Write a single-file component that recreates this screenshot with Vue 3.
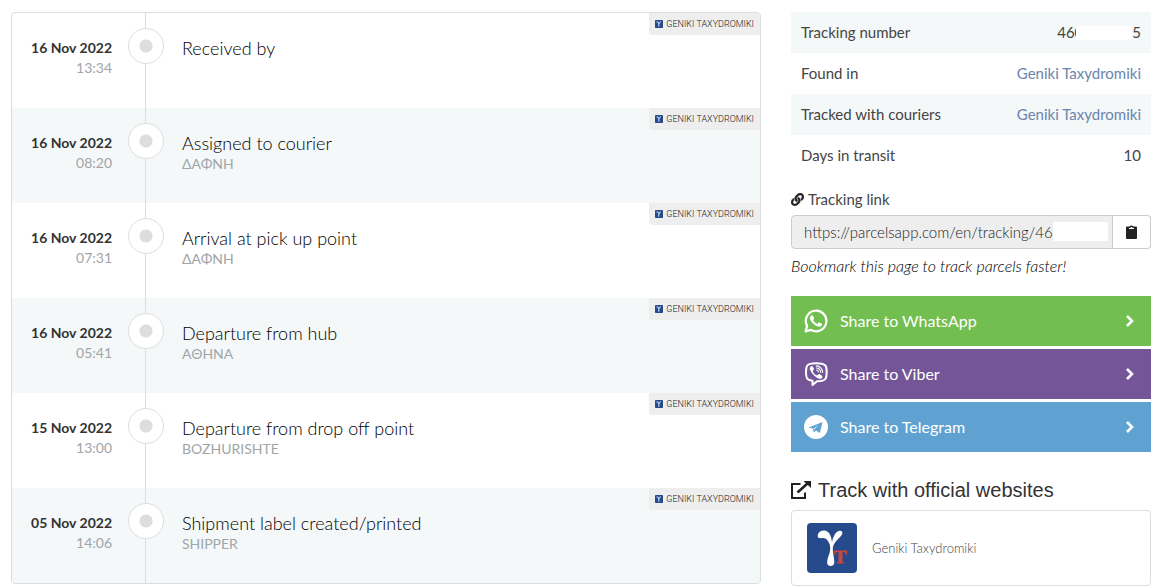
<script setup>
const events = [
  { date: '16 Nov 2022', time: '13:34', title: 'Received by', place: '' },
  { date: '16 Nov 2022', time: '08:20', title: 'Assigned to courier', place: 'ΔΑΦΝΗ' },
  { date: '16 Nov 2022', time: '07:31', title: 'Arrival at pick up point', place: 'ΔΑΦΝΗ' },
  { date: '16 Nov 2022', time: '05:41', title: 'Departure from hub', place: 'ΑΘΗΝΑ' },
  { date: '15 Nov 2022', time: '13:00', title: 'Departure from drop off point', place: 'BOZHURISHTE' },
  { date: '05 Nov 2022', time: '14:06', title: 'Shipment label created/printed', place: 'SHIPPER' },
]
const shares = [
  { id: 'whatsapp', name: 'Share to WhatsApp' },
  { id: 'viber', name: 'Share to Viber' },
  { id: 'telegram', name: 'Share to Telegram' },
]
const trackingUrl = 'https://parcelsapp.com/en/tracking/46'
</script>

<template>
  <main class="page">
    <ol class="timeline">
      <li v-for="e in events" :key="e.date + e.time" class="event">
        <div class="when">
          <strong>{{ e.date }}</strong>
          <time>{{ e.time }}</time>
        </div>
        <div class="rail"><span class="dot"></span></div>
        <div class="what">
          <div class="title">{{ e.title }}</div>
          <div v-if="e.place" class="place">{{ e.place }}</div>
        </div>
        <div class="badge">
          <svg viewBox="0 0 50 50" aria-hidden="true">
            <rect width="50" height="50" rx="4" fill="#264b8c" />
            <path d="M10 12q12-4 14 12v18M24 26q2-14 13-16" fill="none" stroke="#dfe8f5" stroke-width="6" />
          </svg>
          <span>GENIKI TAXYDROMIKI</span>
        </div>
      </li>
    </ol>

    <aside class="side">
      <table class="info">
        <tbody>
          <tr>
            <th scope="row">Tracking number</th>
            <td><span class="number">460<i class="mask"></i>5</span></td>
          </tr>
          <tr>
            <th scope="row">Found in</th>
            <td><a href="#">Geniki Taxydromiki</a></td>
          </tr>
          <tr>
            <th scope="row">Tracked with couriers</th>
            <td><a href="#">Geniki Taxydromiki</a></td>
          </tr>
          <tr>
            <th scope="row">Days in transit</th>
            <td>10</td>
          </tr>
        </tbody>
      </table>

      <label class="link-label" for="tracking-link">
        <svg viewBox="0 0 512 512" aria-hidden="true">
          <path fill="#222" stroke="#222" stroke-width="14" d="M326.6 185.4c59.7 59.8 58.9 155.7.4 214.6l-.4.4-67.2 67.2c-59.3 59.3-155.7 59.3-215 0s-59.3-155.7 0-215l37.1-37.1c9.8-9.8 26.8-3.3 27.3 10.6.6 17.7 3.8 35.5 9.7 52.7 2 5.8.6 12.3-3.8 16.6l-13.1 13.1c-28 28-28.9 73.7-1.2 102 28 28.6 74.1 28.7 102.3.5l67.2-67.2c28.2-28.2 28.1-73.8 0-101.8-3.7-3.7-7.4-6.6-10.3-8.6a16 16 0 0 1-6.9-12.6c-.4-10.6 3.3-21.5 11.7-29.8l21-21.1c5.5-5.5 14.2-6.2 20.6-1.7a152.5 152.5 0 0 1 20.5 17.2zM467.5 44.4c-59.3-59.3-155.7-59.3-215 0l-67.2 67.2-.4.4c-58.6 58.9-59.4 154.8.4 214.6a152.5 152.5 0 0 0 20.5 17.2c6.4 4.5 15.1 3.8 20.6-1.7l21-21.1c8.4-8.4 12.1-19.2 11.7-29.8a16 16 0 0 0-6.9-12.6c-2.9-2-6.6-4.9-10.3-8.6-28.1-28-28.2-73.6 0-101.8l67.2-67.2c28.2-28.2 74.3-28.1 102.3.5 27.8 28.3 26.9 73.9-1.2 102l-13.1 13.1c-4.4 4.4-5.8 10.8-3.8 16.6 5.9 17.2 9 35 9.7 52.7.5 13.9 17.5 20.4 27.3 10.6l37.1-37.1c59.3-59.3 59.3-155.7 0-215z" />
        </svg>
        <span>Tracking link</span>
      </label>
      <div class="link-group">
        <input id="tracking-link" type="text" readonly :value="trackingUrl" />
        <i class="link-mask"></i>
        <button type="button" aria-label="Copy link">
          <svg viewBox="0 0 11 14" aria-hidden="true">
            <path fill="#222" fill-rule="evenodd" d="M1 1.5h2.6a2 1.6 0 0 1 3.8 0H10a1 1 0 0 1 1 1V13a1 1 0 0 1-1 1H1a1 1 0 0 1-1-1V2.500a1 1 0 0 1 1-1zM3 3v1h5V3H6.300V2H4.700v1z" />
          </svg>
        </button>
      </div>
      <p class="hint">Bookmark this page to track parcels faster!</p>

      <nav class="shares">
        <a v-for="s in shares" :key="s.id" href="#" class="share" :class="s.id">
          <svg v-if="s.id === 'whatsapp'" class="brand" viewBox="0 0 24 24" aria-hidden="true">
            <path fill="#fff" d="M17.472 14.382c-.297-.149-1.758-.867-2.030-.967-.273-.099-.471-.148-.670.150-.197.297-.767.966-.940 1.164-.173.199-.347.223-.644.075-.297-.150-1.255-.463-2.390-1.475-.883-.788-1.480-1.761-1.653-2.059-.173-.297-.018-.458.130-.606.134-.133.298-.347.446-.520.149-.174.198-.298.298-.497.099-.198.050-.371-.025-.520-.075-.149-.669-1.612-.916-2.207-.242-.579-.487-.500-.669-.510-.173-.008-.371-.010-.570-.010-.198 0-.520.074-.792.372-.272.297-1.040 1.016-1.040 2.479 0 1.462 1.065 2.875 1.213 3.074.149.198 2.096 3.200 5.077 4.487.709.306 1.262.489 1.694.625.712.227 1.360.195 1.871.118.571-.085 1.758-.719 2.006-1.413.248-.694.248-1.289.173-1.413-.074-.124-.272-.198-.570-.347z" />
            <path fill="none" stroke="#fff" stroke-width="2.200" stroke-linejoin="round" d="M1.600 22.400l1.500-5.500a10.300 10.300 0 1 1 4 4z" />
          </svg>
          <svg v-else-if="s.id === 'viber'" class="brand" viewBox="0 0 24 24" aria-hidden="true">
            <path fill="none" stroke="#fff" stroke-width="2" stroke-linejoin="round" d="M12 1.200c6 0 8.300.8 9.500 2.500 1.600 2.300 1.600 10.500 0 13-1.200 1.800-4 2.500-8.500 2.500L8.500 23v-4.300c-3-.4-4.500-1-5.400-2.300-1.500-2.300-1.500-10.400 0-12.700C4.200 2 6.500 1.200 12 1.200z" />
            <path fill="#fff" d="M7.100 4.200c.7-.3 1.300.2 2.500 1.900.6 1 .4 1.600-.4 2.200-.6.500-.4 1.300.5 2.600.9 1.200 1.900 2.100 2.900 2.400.6.200.9-.1 1.300-.6.600-.7 1.300-.8 2.200-.3 2 1.200 2.700 2 2.300 2.900-.6 1.200-1.800 2-2.900 1.600-4.100-1.600-7.600-5-9.600-9.500-.4-1.100.1-2.500 1.200-3.200z" />
            <path fill="none" stroke="#fff" stroke-width="1.100" stroke-linecap="round" d="M12.300 3.900a6.300 6.300 0 0 1 6.300 6.600M12.500 6a4 4 0 0 1 4 4.200M12.800 8.100q1.500.2 1.600 1.700" />
          </svg>
          <svg v-else class="brand" viewBox="0 0 24 24" aria-hidden="true">
            <circle cx="12" cy="12" r="12" fill="#fff" />
            <path fill="#5fa2d2" d="M5.200 12.200L17.400 7.400c.6-.2 1 .1.800.9l-2.100 8.700c-.1.700-.6.900-1.200.6l-2.900-2.200-1.600 1.600c-.3.300-.7.200-.8-.2l-.7-3.200-3.600-.8c-.5-.1-.5-.4-.1-.6zM9.600 13.500l.5 2.100.3-1.600 5-4.600z" />
          </svg>
          <span>{{ s.name }}</span>
          <svg class="chevron" viewBox="0 0 9 12" aria-hidden="true">
            <path d="M2 1l5 5-5 5" fill="none" stroke="#fff" stroke-width="2.600" />
          </svg>
        </a>
      </nav>

      <h2 class="heading">
        <svg viewBox="0 0 20 18" aria-hidden="true">
          <path fill="none" stroke="#222" stroke-width="2" d="M9.500 3H1v14h13v-5.500" />
          <path fill="none" stroke="#222" stroke-width="2.600" d="M6.500 11.500l10-9" />
          <path fill="#222" d="M12.500 0H20v7z" />
        </svg>
        <span>Track with official websites</span>
      </h2>
      <a href="#" class="site">
        <svg viewBox="0 0 50 50" aria-hidden="true">
          <rect width="50" height="50" rx="4" fill="#264b8c" />
          <path fill="#c9473f" d="M27 27.500h13v4h-1c-.3-1.800-1-2.500-2.800-2.500h-.7v9c0 1.200.5 1.500 2 1.600v.9h-8v-.9c1.500-.1 2-.4 2-1.600v-9h-.7c-1.800 0-2.500.7-2.800 2.500h-1z" />
          <path fill="#fff" d="M11 14.500C9.800 10 13.500 7 17.500 7.500c5.500.8 7.200 7 7.500 12C26 13.500 28.500 8.500 32.500 7.700c2.500-.3 3.600 1.600 2.500 3.700-1.800 3.500-8.500 7-9.200 13.600-.2 5 1.500 9.500 1.500 14 0 2.600-1.500 4-3.700 4s-3.600-1.500-3.500-4c.2-4.500 3.300-9 3.200-14-.2-5-3.300-10-7.300-10-1.500 0-3 .6-5-.5z" />
        </svg>
        <span>Geniki Taxydromiki</span>
      </a>
    </aside>
  </main>
</template>

<style>
body {
  margin: 0;
  background: #fff;
}
</style>

<style scoped>
.page {
  box-sizing: border-box;
  display: grid;
  grid-template-columns: 25fr 12fr;
  gap: 30px;
  align-items: start;
  padding: 12px 10px 0 11px;
  font: 400 15px/20px Lato, "Open Sans", "Noto Sans", sans-serif;
  color: #444;
}
.timeline {
  list-style: none;
  margin: 0;
  padding: 0;
  border: 1px solid #ddd;
  border-radius: 4px;
  overflow: hidden;
}
.event {
  position: relative;
  display: grid;
  grid-template-columns: 100px 68px 1fr;
  min-height: 95px;
}
.event:nth-child(even) {
  background: #f4f8f9;
}
.when {
  padding-top: 25px;
  font-size: 14px;
  text-align: right;
}
.when strong,
.when time {
  display: block;
}
.when strong {
  color: #333;
  font-weight: 700;
}
.when time,
.place {
  color: #a0a5a8;
}
.place {
  font-size: 14px;
}
.rail {
  display: flex;
  justify-content: center;
  align-items: flex-start;
  padding-top: 15px;
  background: linear-gradient(#ddd, #ddd) 33px 0 / 1px 100% no-repeat;
}
.dot {
  box-sizing: border-box;
  width: 36px;
  height: 36px;
  border: 1px solid #ddd;
  border-radius: 50%;
  background: radial-gradient(circle, #ddd 6px, #fff 7px);
}
.what {
  padding: 25px 0 0 2px;
}
.title {
  color: #000;
  font-size: 18px;
  font-weight: 300;
  line-height: 20px;
}
.place {
  line-height: 22px;
}
.badge {
  position: absolute;
  top: 0;
  right: 0;
  display: flex;
  align-items: center;
  gap: 3px;
  height: 22px;
  padding: 0 6px;
  border-radius: 0 0 0 3px;
  background: #eee;
  color: #222;
  font: 300 9px/22px Roboto, sans-serif;
}
.badge svg {
  width: 8px;
  height: 8px;
}
.info {
  width: 100%;
  border-collapse: collapse;
}
.info tr:nth-child(odd) {
  background: #f4f8f9;
}
.info th,
.info td {
  padding: 10px;
  line-height: 21px;
  font-weight: inherit;
  text-align: left;
}
.info td {
  text-align: right;
}
.info a {
  color: #6a84ae;
  text-decoration: none;
}
.number {
  display: inline-flex;
  align-items: center;
}
.mask {
  width: 56px;
  height: 14px;
  margin-left: -7px;
  background: #fff;
}
.link-label {
  display: flex;
  align-items: center;
  gap: 4px;
  margin-top: 13px;
}
.link-label svg {
  width: 13px;
  height: 13px;
}
.link-group {
  position: relative;
  display: flex;
  margin-top: 6px;
}
.link-group input {
  flex: 1;
  min-width: 0;
  box-sizing: border-box;
  height: 34px;
  padding: 0 12px;
  border: 1px solid #ccc;
  border-radius: 4px 0 0 4px;
  background: #eee;
  color: #222;
  font: inherit;
  font-weight: 300;
}
.link-mask {
  position: absolute;
  top: 7px;
  right: 43px;
  width: 55px;
  height: 19px;
  background: #fff;
}
.link-group button {
  display: flex;
  align-items: center;
  justify-content: center;
  box-sizing: border-box;
  width: 38px;
  padding: 0;
  border: 1px solid #ccc;
  border-left: 0;
  border-radius: 0 4px 4px 0;
  background: #fff;
}
.link-group button svg {
  width: 11px;
  height: 14px;
}
.hint {
  margin: 7px 0 20px;
  color: #000;
  font-size: 16px;
  font-style: italic;
  font-weight: 300;
}
.shares {
  display: flex;
  flex-direction: column;
  gap: 3px;
}
.share {
  display: flex;
  align-items: center;
  height: 50px;
  padding: 0 17px 0 13px;
  color: #fff;
  font-size: 16px;
  text-decoration: none;
}
.whatsapp {
  background: #73be50;
}
.viber {
  background: #745698;
}
.telegram {
  background: #5fa2d2;
}
.brand {
  width: 24px;
  height: 24px;
  margin-right: 12px;
}
.chevron {
  width: 9px;
  height: 12px;
  margin-left: auto;
}
.heading {
  display: flex;
  align-items: center;
  gap: 7px;
  margin: 26px 0 8px;
  color: #333;
  font: 20px/24px "Liberation Sans", Arial, sans-serif;
}
.heading svg {
  width: 20px;
  height: 18px;
}
.site {
  display: flex;
  align-items: center;
  gap: 15px;
  padding: 12px 15px;
  border: 1px solid #ddd;
  border-radius: 4px;
  color: #444;
  font-size: 13px;
  font-weight: 300;
  text-decoration: none;
}
.site svg {
  width: 50px;
  height: 50px;
}
</style>
